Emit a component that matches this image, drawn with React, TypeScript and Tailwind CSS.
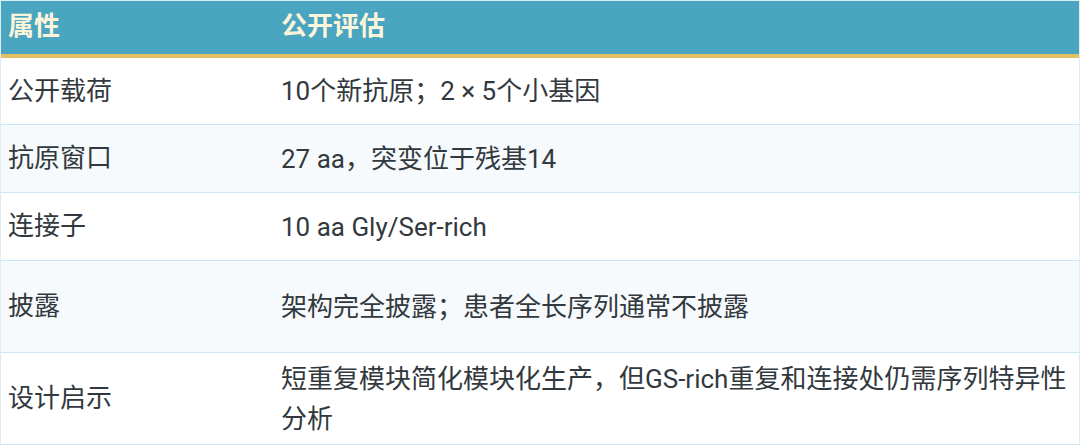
const rows = [
  { attr: '公开载荷', value: '10个新抗原；2 × 5个小基因', height: 'h-[67px]' },
  { attr: '抗原窗口', value: '27 aa，突变位于残基14', height: 'h-[68px]' },
  { attr: '连接子', value: '10 aa Gly/Ser-rich', height: 'h-[68px]' },
  { attr: '披露', value: '架构完全披露；患者全长序列通常不披露', height: 'h-[92px]' },
  {
    attr: '设计启示',
    value: '短重复模块简化模块化生产，但GS-rich重复和连接处仍需序列特异性分析',
    height: 'h-[92px]',
  },
];

export default function App() {
  return (
    <div className="h-[445px] w-[1080px] bg-white font-['Roboto','Noto_Sans_CJK_SC',sans-serif] text-[26px] text-[#32393e]">
      <div className="border-x border-t border-[#dcecf3]">
        <div className="grid h-[57px] grid-cols-[280px_1fr] items-center border-b-4 border-[#e2c064] bg-[#4aa5c1] pb-[2px] font-bold text-[#fcf5da]">
          <div className="pl-[7px]">属性</div>
          <div>公开评估</div>
        </div>
        {rows.map((row, index) => (
          <div
            key={row.attr}
            className={`grid grid-cols-[280px_1fr] items-center border-b border-[#cbe8f6] ${row.height} ${
              index % 2 === 1 ? 'bg-[#f6fafd]' : 'bg-white'
            }`}
          >
            <div className="pl-[7px]">{row.attr}</div>
            <div className="pr-[6px] leading-[40px]">{row.value}</div>
          </div>
        ))}
      </div>
    </div>
  );
}
